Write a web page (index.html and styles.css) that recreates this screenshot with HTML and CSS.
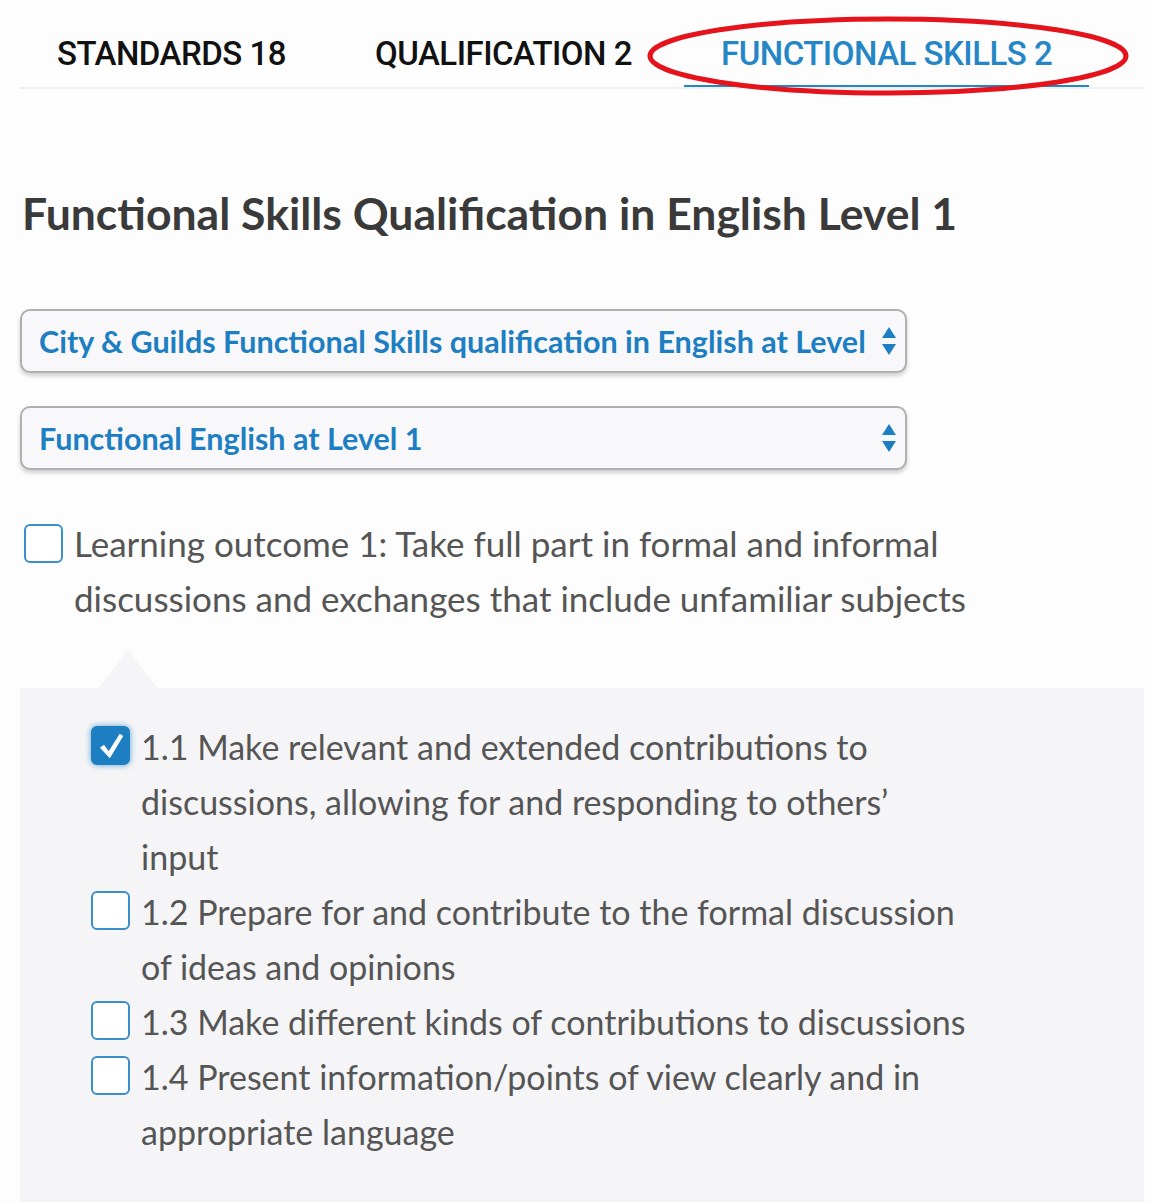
FILE: index.html
```html
<!DOCTYPE html>
<html lang="en">

<head>
  <meta charset="UTF-8">
  <meta name="viewport" content="width=device-width, initial-scale=1.0">
  <title>Functional Skills</title>
  <link rel="stylesheet" href="styles.css">
</head>

<body>
  <div class="page">
    <!-- tabs -->
    <nav class="tabs">
      <div class="tab">STANDARDS 18</div>
      <div class="tab">QUALIFICATION 2</div>
      <div class="tab active">FUNCTIONAL SKILLS 2
        <svg class="ring" viewBox="0 0 484 80" width="484" height="80">
          <ellipse cx="242" cy="40" rx="238" ry="37" fill="none" stroke="#e5131c" stroke-width="5"/>
        </svg>
      </div>
    </nav>

    <h1 class="title">Functional Skills Qualification in English Level 1</h1>

    <!-- selects -->
    <div class="select">
      <span class="select-text">City &amp; Guilds Functional Skills qualification in English at Level</span>
      <svg class="arrows" viewBox="0 0 16 30" width="16" height="30">
        <path d="M8 1 L15 12 L1 12 Z" fill="#1d7fc2"/>
        <path d="M8 29 L15 18 L1 18 Z" fill="#1d7fc2"/>
      </svg>
    </div>
    <div class="select">
      <span class="select-text">Functional English at Level 1</span>
      <svg class="arrows" viewBox="0 0 16 30" width="16" height="30">
        <path d="M8 1 L15 12 L1 12 Z" fill="#1d7fc2"/>
        <path d="M8 29 L15 18 L1 18 Z" fill="#1d7fc2"/>
      </svg>
    </div>

    <!-- learning outcome -->
    <label class="outcome">
      <span class="box"></span>
      <span class="outcome-text">Learning outcome 1: Take full part in formal and informal discussions and exchanges that include unfamiliar subjects</span>
    </label>

    <!-- criteria -->
    <div class="panel">
      <span class="notch"></span>
      <label class="item">
        <span class="box checked">
          <svg viewBox="0 0 24 24" width="28" height="28">
            <path d="M2.5 13.5 L6 11 L10 16.5 L19.5 1.5 L22.5 3.5 L11 22.5 Z" fill="#fff"/>
          </svg>
        </span>
        <span class="item-text">1.1 Make relevant and extended contributions to discussions, allowing for and responding to others’ input</span>
      </label>
      <label class="item">
        <span class="box"></span>
        <span class="item-text">1.2 Prepare for and contribute to the formal discussion of ideas and opinions</span>
      </label>
      <label class="item">
        <span class="box"></span>
        <span class="item-text">1.3 Make different kinds of contributions to discussions</span>
      </label>
      <label class="item">
        <span class="box"></span>
        <span class="item-text">1.4 Present information/points of view clearly and in appropriate language</span>
      </label>
    </div>
  </div>
</body>

</html>
```

FILE: styles.css
```css
* {
  margin: 0;
  padding: 0;
  box-sizing: border-box;
}

body {
  font-family: Lato, "Open Sans", Arial, sans-serif;
  background-color: #fdfdfd;
  color: #555;
}

.page {
  padding: 0 8px 0 20px;
}

/* tabs */
.tabs {
  display: flex;
  gap: 15px;
  border-bottom: 2px solid #f0f0f0;
  height: 89px;
}

.tab {
  position: relative;
  padding: 35px 37px 0;
  font-family: Roboto, Arial, sans-serif;
  font-weight: 500;
  font-size: 33px;
  line-height: 38px;
  color: #111;
  letter-spacing: -0.5px;
}

.tab.active {
  color: #2486c5;
  border-bottom: 2px solid #2486c5;
}

.ring {
  position: absolute;
  left: -38px;
  top: 16px;
}

/* heading */
.title {
  margin: 96px 0 0 2px;
  font-size: 44.5px;
  font-weight: 700;
  line-height: 56px;
  color: #3a3a3a;
}

/* selects */
.select {
  display: flex;
  align-items: center;
  justify-content: space-between;
  width: 887px;
  height: 64px;
  padding: 0 8px 0 17px;
  border: 2px solid #b0b0b0;
  border-radius: 10px;
  background-color: #f8f8fa;
  box-shadow: 0 3px 4px rgba(0, 0, 0, 0.18);
}

.title + .select {
  margin-top: 68px;
}

.select + .select {
  margin-top: 33px;
}

.select-text {
  font-size: 30.5px;
  font-weight: 700;
  color: #1d7fc2;
  white-space: nowrap;
}

/* checkboxes */
.box {
  flex: none;
  display: flex;
  align-items: center;
  justify-content: center;
  width: 39px;
  height: 39px;
  border: 2px solid #3a8ec9;
  border-radius: 6px;
  background-color: #fff;
}

.box.checked {
  background-color: #1d7fc2;
  border-color: #1d7fc2;
  box-shadow: 0 0 6px rgba(29, 127, 194, 0.7);
}

.outcome {
  display: flex;
  gap: 11px;
  margin: 46px 0 0 4px;
  font-size: 35px;
  line-height: 55px;
  width: 960px;
}

.outcome .box {
  margin-top: 8px;
}

/* panel */
.panel {
  position: relative;
  margin-top: 62px;
  padding: 31px 0 40px 71px;
  background-color: #f5f5f7;
  min-height: 520px;
}

.notch {
  position: absolute;
  left: 78px;
  top: -38px;
  border-left: 30px solid transparent;
  border-right: 30px solid transparent;
  border-bottom: 38px solid #f5f5f7;
}

.item {
  display: flex;
  gap: 11px;
  font-size: 34px;
  line-height: 55px;
}

.item-text {
  width: 828px;
}

.item .box {
  margin-top: 7px;
}
```
